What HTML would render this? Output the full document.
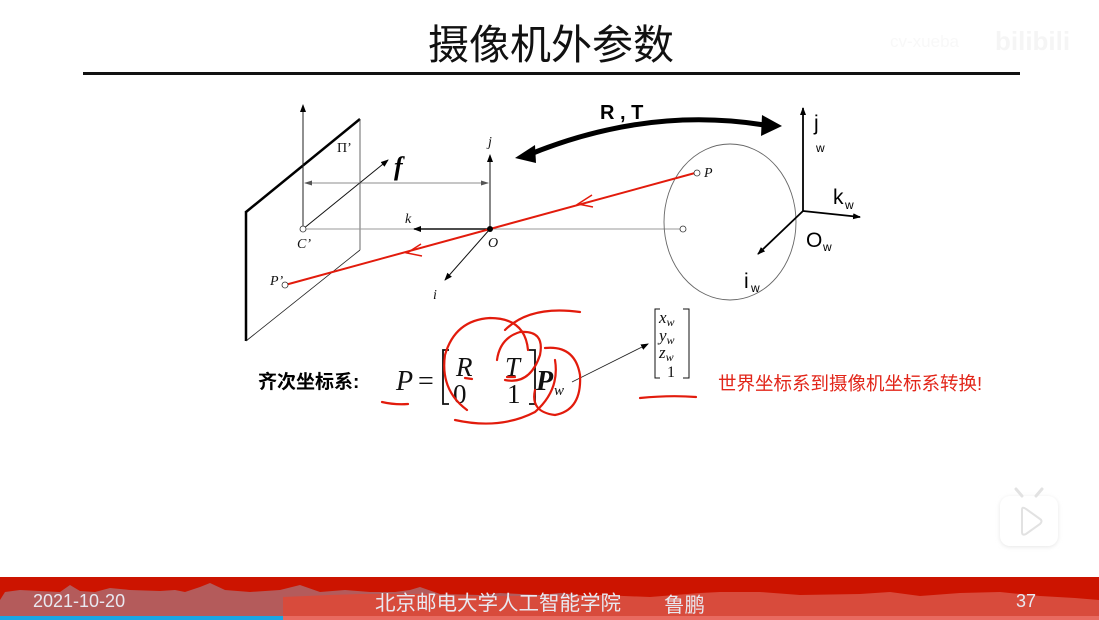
<!DOCTYPE html>
<html><head><meta charset="utf-8"><style>
html,body{margin:0;padding:0;background:#fff;width:1099px;height:620px;overflow:hidden}
svg{display:block}
</style></head><body>
<svg width="1099" height="620" viewBox="0 0 1099 620" xmlns="http://www.w3.org/2000/svg">
<defs>
<marker id="ah" markerWidth="8" markerHeight="8" refX="7" refY="4" orient="auto" markerUnits="userSpaceOnUse"><path d="M0,1 L8,4 L0,7 Z" fill="#000"/></marker>
<marker id="ahs" markerWidth="8" markerHeight="8" refX="7" refY="4" orient="auto-start-reverse" markerUnits="userSpaceOnUse"><path d="M0,1.5 L8,4 L0,6.5 Z" fill="#555"/></marker>
<filter id="sh" x="-30%" y="-30%" width="160%" height="160%"><feGaussianBlur stdDeviation="2"/></filter>
</defs>
<text x="551" y="59" text-anchor="middle" font-family="'Liberation Sans','Noto Sans CJK SC',sans-serif" font-size="41" fill="#111">摄像机外参数</text>
<rect x="83" y="72" width="937" height="3" fill="#111"/>
<text x="890" y="47" font-family="'Liberation Sans',sans-serif" font-size="17" fill="#f8f8f8">cv-xueba</text>
<text x="995" y="50" font-family="'Liberation Sans',sans-serif" font-size="26" font-weight="bold" fill="#f5f5f5">bilibili</text>

<!-- plane -->
<line x1="246" y1="212" x2="360" y2="119" stroke="#000" stroke-width="2.5"/>
<line x1="246" y1="211" x2="246" y2="341" stroke="#000" stroke-width="2.5"/>
<line x1="246" y1="341" x2="360" y2="250" stroke="#222" stroke-width="0.8"/>
<line x1="360" y1="119" x2="360" y2="250" stroke="#444" stroke-width="0.8"/>
<line x1="303" y1="229" x2="303" y2="105" stroke="#222" stroke-width="1" marker-end="url(#ah)"/>
<line x1="303" y1="229" x2="388" y2="160" stroke="#111" stroke-width="1" marker-end="url(#ah)"/>
<line x1="305" y1="183" x2="488" y2="183" stroke="#666" stroke-width="0.8" marker-start="url(#ahs)" marker-end="url(#ahs)"/>
<line x1="303" y1="229" x2="680" y2="229" stroke="#999" stroke-width="1"/>
<line x1="490" y1="229" x2="490" y2="155" stroke="#111" stroke-width="1" marker-end="url(#ah)"/>
<line x1="490" y1="229" x2="414" y2="229" stroke="#111" stroke-width="1.5" marker-end="url(#ah)"/>
<line x1="490" y1="229" x2="445" y2="280" stroke="#111" stroke-width="1" marker-end="url(#ah)"/>
<ellipse cx="730" cy="222" rx="66" ry="78" fill="none" stroke="#666" stroke-width="0.9"/>
<line x1="285" y1="285" x2="695" y2="173" stroke="#e21b0c" stroke-width="2"/>
<path d="M592,195 L578,204 L593,207" fill="none" stroke="#e21b0c" stroke-width="1.5"/>
<path d="M421,244 L407,253 L422,256" fill="none" stroke="#e21b0c" stroke-width="1.5"/>
<circle cx="490" cy="229" r="3" fill="#000"/>
<circle cx="303" cy="229" r="3" fill="#fff" stroke="#333" stroke-width="0.8"/>
<circle cx="683" cy="229" r="3" fill="#fff" stroke="#333" stroke-width="0.8"/>
<circle cx="697" cy="173" r="3" fill="#fff" stroke="#333" stroke-width="0.8"/>
<circle cx="285" cy="285" r="3" fill="#fff" stroke="#333" stroke-width="0.8"/>
<g font-family="'Liberation Serif',serif" font-style="italic" font-size="14" fill="#111">
<text x="704" y="177">P</text><text x="297" y="248">C’</text><text x="488" y="247">O</text>
<text x="270" y="285">P’</text><text x="488" y="146">j</text><text x="405" y="223">k</text><text x="433" y="299">i</text>
</g>
<text x="337" y="152" font-family="'Liberation Serif',serif" font-size="14" fill="#111">Π’</text>
<text x="394" y="175" font-family="'Liberation Serif',serif" font-style="italic" font-weight="bold" font-size="26" fill="#000">f</text>
<!-- RT arrow -->
<path d="M528,155 Q650,105 770,126" fill="none" stroke="#000" stroke-width="5"/>
<path d="M515,158 L535,145 L536,163 Z" fill="#000"/>
<path d="M782,126 L762,115 L761,136 Z" fill="#000"/>
<text x="600" y="119" font-family="'Liberation Sans',sans-serif" font-weight="bold" font-size="20" fill="#000">R , T</text>
<!-- world axes -->
<line x1="803" y1="211" x2="803" y2="108" stroke="#000" stroke-width="1.8" marker-end="url(#ah)"/>
<line x1="803" y1="211" x2="860" y2="217" stroke="#000" stroke-width="1.8" marker-end="url(#ah)"/>
<line x1="803" y1="211" x2="758" y2="254" stroke="#000" stroke-width="1.8" marker-end="url(#ah)"/>
<g font-family="'Liberation Sans',sans-serif" fill="#000">
<text x="814" y="130" font-size="21">j</text><text x="816" y="152" font-size="12">w</text>
<text x="833" y="204" font-size="21">k</text><text x="845" y="209" font-size="12">w</text>
<text x="806" y="247" font-size="21">O</text><text x="823" y="251" font-size="12">w</text>
<text x="744" y="288" font-size="21">i</text><text x="751" y="292" font-size="12">w</text>
</g>
<!-- formula -->
<text x="258" y="388" font-family="'Liberation Sans','Noto Sans CJK SC',sans-serif" font-weight="bold" font-size="19" fill="#000">齐次坐标系:</text>
<g font-family="'Liberation Serif',serif" fill="#111">
<text x="396" y="390" font-size="28" font-style="italic">P</text>
<text x="418" y="390" font-size="28">=</text>
<path d="M449,350 L443,350 L443,404 L449,404" fill="none" stroke="#111" stroke-width="1.8"/>
<path d="M529,350 L535,350 L535,404 L529,404" fill="none" stroke="#111" stroke-width="1.8"/>
<text x="456" y="376" font-size="27" font-style="italic">R</text>
<text x="505" y="376" font-size="27" font-style="italic">T</text>
<text x="453" y="403" font-size="27">0</text>
<text x="507" y="403" font-size="27">1</text>
<text x="536" y="390" font-size="28" font-style="italic" font-weight="bold">P</text>
<text x="554" y="395" font-size="15" font-style="italic">w</text>
<path d="M660,309 L655,309 L655,378 L660,378 M683,309 L689,309 L689,378 L683,378" fill="none" stroke="#111" stroke-width="1"/>
<text x="659" y="323" font-size="17" font-style="italic">x<tspan font-size="12" dy="3">w</tspan></text>
<text x="659" y="341" font-size="17" font-style="italic">y<tspan font-size="12" dy="3">w</tspan></text>
<text x="659" y="358" font-size="17" font-style="italic">z<tspan font-size="12" dy="3">w</tspan></text>
<text x="667" y="377" font-size="16">1</text>
</g>
<line x1="572" y1="382" x2="648" y2="344" stroke="#222" stroke-width="0.8" marker-end="url(#ah)"/>
<text x="718" y="390" font-family="'Liberation Sans','Noto Sans CJK SC',sans-serif" font-size="18.5" fill="#e2261a">世界坐标系到摄像机坐标系转换!</text>
<!-- red scribbles -->
<g fill="none" stroke="#e21b0c" stroke-width="2.2" stroke-linecap="round">
<path d="M382,402 Q395,405 408,404"/>
<path d="M640,398 Q670,395 696,397"/>
<path d="M467,410 Q440,390 445,355 Q455,320 490,318 Q525,318 528,350"/>
<path d="M455,420 Q500,430 535,412 Q560,390 555,360"/>
<path d="M505,330 Q530,305 580,312"/>
<path d="M497,360 Q500,338 520,332 Q545,330 540,355 Q530,385 505,380"/>
<path d="M545,348 Q575,345 580,375 Q582,410 555,415 Q530,412 535,390"/>
<path d="M465,378 L472,379 M507,377 L515,377"/>
</g>
<!-- play icon -->
<g>
<rect x="1000" y="497" width="58" height="50" rx="10" fill="#e6e6e6" filter="url(#sh)"/>
<rect x="1000" y="496" width="58" height="50" rx="10" fill="#fff"/>
<path d="M1016,489 L1022,496 M1042,489 L1036,496" stroke="#e2e2e2" stroke-width="3" stroke-linecap="round"/>
<path d="M1022,510 L1022,532 Q1022,536 1026,534 L1040,524 Q1043,521 1040,519 L1026,509 Q1022,506 1022,510 Z" fill="none" stroke="#e2e2e2" stroke-width="2"/>
</g>
<!-- footer -->
<rect x="0" y="577" width="1099" height="40" fill="#cc1400"/>
<path d="M0,617 L0,600 L5,592 L20,590 L60,592 L70,585 L80,591 L95,592 L110,588 L130,590 L160,591 L175,590 L185,592 L200,587 L210,583 L225,590 L250,592 L280,590 L300,585 L320,592 L345,590 L370,592 L395,592 L410,590 L420,587 L440,594 L480,595 L500,593 L540,595 L560,593 L600,597 L283,617 Z" fill="#b45b5b"/>
<path d="M283,617 L283,597 L330,595 L360,594 L420,594 L470,596 L540,596 L600,595 L650,597 L700,593 L720,592 L760,592 L800,595 L860,594 L890,592 L920,596 L960,593 L1000,592 L1040,596 L1075,598 L1099,600 L1099,617 Z" fill="#d84b3c"/>
<rect x="0" y="616" width="283" height="4" fill="#1aa6e4"/>
<rect x="283" y="616" width="816" height="4" fill="#e86a60"/>
<g font-family="'Liberation Sans','Noto Sans CJK SC',sans-serif" fill="#e8e8f0">
<text x="33" y="607" font-size="18">2021-10-20</text>
<text x="375" y="610" font-size="20.5">北京邮电大学人工智能学院</text>
<text x="664" y="612" font-size="20.5">鲁鹏</text>
<text x="1016" y="607" font-size="18">37</text>
</g>
</svg>
</body></html>
